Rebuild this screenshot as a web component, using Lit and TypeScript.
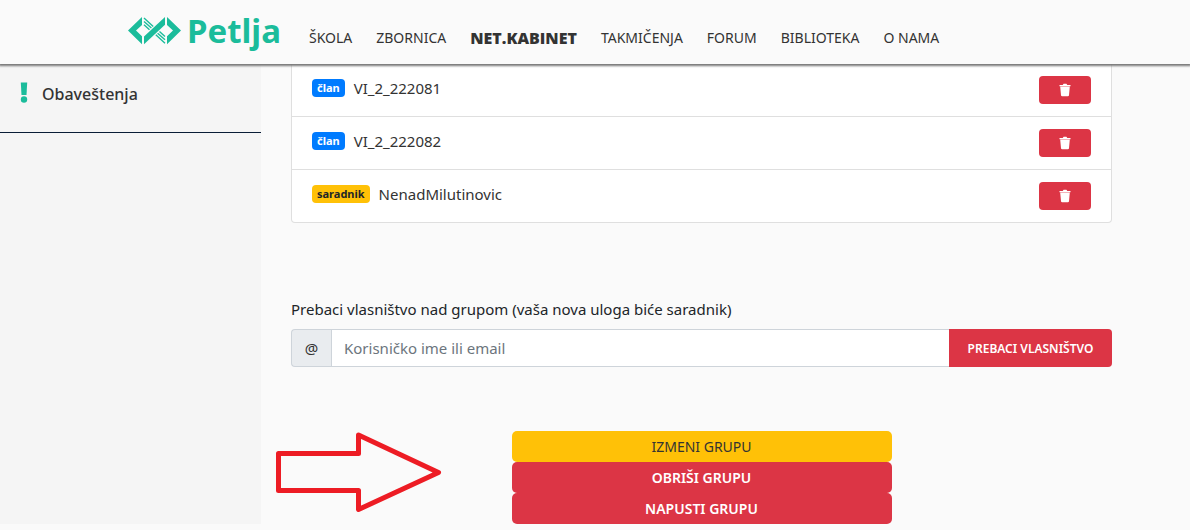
import { LitElement, html, css, svg } from "lit";
import { customElement, property } from "lit/decorators.js";

const trashIcon = svg`
  <svg class="trash" viewBox="0 0 12 14" width="12" height="14" aria-hidden="true">
    <path fill="currentColor" d="M.5 1.900h3.200L4.600.8h2.800l.9 1.100h3.200v1.300H.5z" />
    <path fill="currentColor" d="M1.200 3.600h9.600l-.8 8.600q-.1 1.100-1.200 1.100H3.200Q2.100 13.300 2 12.200z" />
  </svg>`;

@customElement("site-header")
class SiteHeader extends LitElement {
  static styles = css`
    :host {
      display: block;
      position: relative;
      z-index: 2;
      background: #fafafa;
      box-shadow: 0 1px 2px 1px #777;
    }
    .bar {
      display: flex;
      align-items: flex-start;
      height: 64px;
      padding-left: 128px;
      gap: 28px;
    }
    .logo {
      display: flex;
      gap: 6px;
      color: #1bbc9b;
      text-decoration: none;
    }
    .mark {
      margin-top: 16px;
    }
    .word {
      font: 700 33px/62px "Noto Sans", sans-serif;
    }
    .nav {
      display: flex;
      gap: 24px;
      padding-top: 28px;
    }
    .link {
      color: #333;
      text-decoration: none;
      white-space: nowrap;
      font-size: 14px;
      line-height: 20px;
    }
    .active {
      font-family: "Open Sans", sans-serif;
      font-size: 16px;
      font-weight: 800;
    }
  `;
  private items = ["ŠKOLA", "ZBORNICA", "NET.KABINET", "TAKMIČENJA", "FORUM", "BIBLIOTEKA", "O NAMA"];
  render() {
    return html`
      <header class="bar">
        <a class="logo" href="#">
          <svg class="mark" viewBox="0 0 53 30" width="53" height="30" aria-hidden="true">
            <g fill="#1bbc9b">
              <path d="M14 1v8L8 14.600l6 5.600v8L0 14.600z" />
              <path d="M39 1v8l6 5.600-6 5.600v8l14-13.600z" />
              <path d="M16 28.200V20.400L37 1v7.800z" />
            </g>
            <g stroke="#1bbc9b" stroke-width="1.400" fill="none">
              <path d="M16 2l9.200 8.400M16 5.400l7.400 6.600M16 8.800l5.500 5" />
              <path d="M37 27.200l-9.200-8.400M37 23.800l-7.400-6.600M37 20.400l-5.500-5" />
            </g>
          </svg>
          <span class="word">Petlja</span>
        </a>
        <nav class="nav">
          ${this.items.map(
            (t) => html`<a class="link ${t === "NET.KABINET" ? "active" : ""}" href="#">${t}</a>`
          )}
        </nav>
      </header>
    `;
  }
}

@customElement("member-row")
class MemberRow extends LitElement {
  @property() role_ = "";
  @property() name = "";
  static styles = css`
    :host {
      display: flex;
      justify-content: space-between;
      align-items: flex-start;
      padding: 12px 20px;
      background: #fff;
      border: 1px solid #dfdfdf;
      border-top: 0;
    }
    :host(:last-child) {
      border-radius: 0 0 4px 4px;
    }
    .who {
      display: flex;
      align-items: center;
      gap: 9px;
      line-height: 24px;
      color: #333;
      font-size: 15px;
    }
    .badge {
      padding: 0 5px;
      border-radius: 4px;
      background: #007bff;
      color: #fff;
      font-size: 11px;
      font-weight: 700;
      line-height: 18px;
    }
    .helper {
      background: #ffc107;
      color: #212529;
    }
    .remove {
      display: flex;
      align-items: center;
      justify-content: center;
      width: 52px;
      height: 28px;
      padding: 0;
      border: 0;
      border-radius: 4px;
      background: #dc3545;
      color: #fff;
    }
  `;
  render() {
    return html`
      <span class="who">
        <span class="badge ${this.role_ === "saradnik" ? "helper" : ""}">${this.role_}</span>
        <span>${this.name}</span>
      </span>
      <button class="remove" type="button" aria-label="Ukloni">${trashIcon}</button>
    `;
  }
}

@customElement("app-root")
class AppRoot extends LitElement {
  static styles = css`
    :host {
      display: block;
      min-height: 100vh;
      background: #fafafa;
      color: #212529;
      font-family: "Noto Sans", "Open Sans", sans-serif;
      font-size: 15px;
    }
    .layout {
      display: grid;
      grid-template-columns: 261px 1fr;
    }
    .side {
      background: #f5f5f5;
    }
    .notice {
      display: flex;
      gap: 14px;
      padding: 18px 20px 26px;
      border-bottom: 1px solid #0a1d37;
      color: #333;
      text-decoration: none;
      font-size: 16px;
      font-weight: 500;
      line-height: 24px;
    }
    .main {
      padding: 0 78px 0 30px;
    }
    .transfer {
      margin-top: 74px;
    }
    .label {
      display: block;
      line-height: 24px;
      margin-bottom: 8px;
    }
    .group {
      display: flex;
      height: 38px;
    }
    .at {
      display: flex;
      align-items: center;
      justify-content: center;
      box-sizing: border-box;
      width: 40px;
      border: 1px solid #ced4da;
      border-right: 0;
      border-radius: 4px 0 0 4px;
      background: #e9ecef;
      color: #333;
    }
    .field {
      flex: 1;
      min-width: 0;
      box-sizing: border-box;
      border: 1px solid #ced4da;
      border-right: 0;
      border-radius: 0;
      padding: 0 12px;
      background: #fff;
      font: inherit;
    }
    .field::placeholder {
      color: #6c757d;
      opacity: 1;
    }
    .btn {
      border: 0;
      background: #dc3545;
      color: #fff;
      font-family: inherit;
      font-weight: 600;
    }
    .send {
      width: 163px;
      padding: 0;
      border-radius: 0 4px 4px 0;
      font-size: 12px;
    }
    .actions {
      position: relative;
      display: flex;
      flex-direction: column;
      align-items: center;
      margin-top: 64px;
    }
    .wide {
      width: 380px;
      height: 31px;
      border-radius: 5px;
      font-size: 14px;
    }
    .edit {
      background: #ffc107;
      color: #333;
      font-weight: 400;
    }
    .arrow {
      position: absolute;
      left: -16px;
      top: 0;
    }
  `;
  private members = [
    ["član", "VI_2_222081"],
    ["član", "VI_2_222082"],
    ["saradnik", "NenadMilutinovic"],
  ];
  render() {
    return html`
      <site-header></site-header>
      <div class="layout">
        <aside class="side">
          <a class="notice" href="#">
            <svg viewBox="0 0 8 22" width="8" height="22" aria-hidden="true">
              <path fill="#1bbc9b" d="M.8 .5h6.400L6.500 13H1.500z" />
              <circle fill="#1bbc9b" cx="4" cy="17.500" r="3.200" />
            </svg>
            <span>Obaveštenja</span>
          </a>
        </aside>
        <main class="main">
          <div>
            ${this.members.map(([r, n]) => html`<member-row .role_=${r} .name=${n}></member-row>`)}
          </div>
          <section class="transfer">
            <label class="label" for="user">Prebaci vlasništvo nad grupom (vaša nova uloga biće saradnik)</label>
            <div class="group">
              <span class="at">@</span>
              <input class="field" id="user" type="text" placeholder="Korisničko ime ili email" />
              <button class="btn send" type="button">PREBACI VLASNIŠTVO</button>
            </div>
          </section>
          <section class="actions">
            <button class="btn wide edit" type="button">IZMENI GRUPU</button>
            <button class="btn wide" type="button">OBRIŠI GRUPU</button>
            <button class="btn wide" type="button">NAPUSTI GRUPU</button>
            <svg class="arrow" viewBox="0 0 168 84" width="168" height="84" aria-hidden="true">
              <path
                d="M3.500 22.500h80V4L163.500 41.500 83.500 78.500V59.500H3.500z"
                fill="none"
                stroke="#ed1c24"
                stroke-width="5"
                stroke-linejoin="round"
              />
            </svg>
          </section>
        </main>
      </div>
    `;
  }
}
